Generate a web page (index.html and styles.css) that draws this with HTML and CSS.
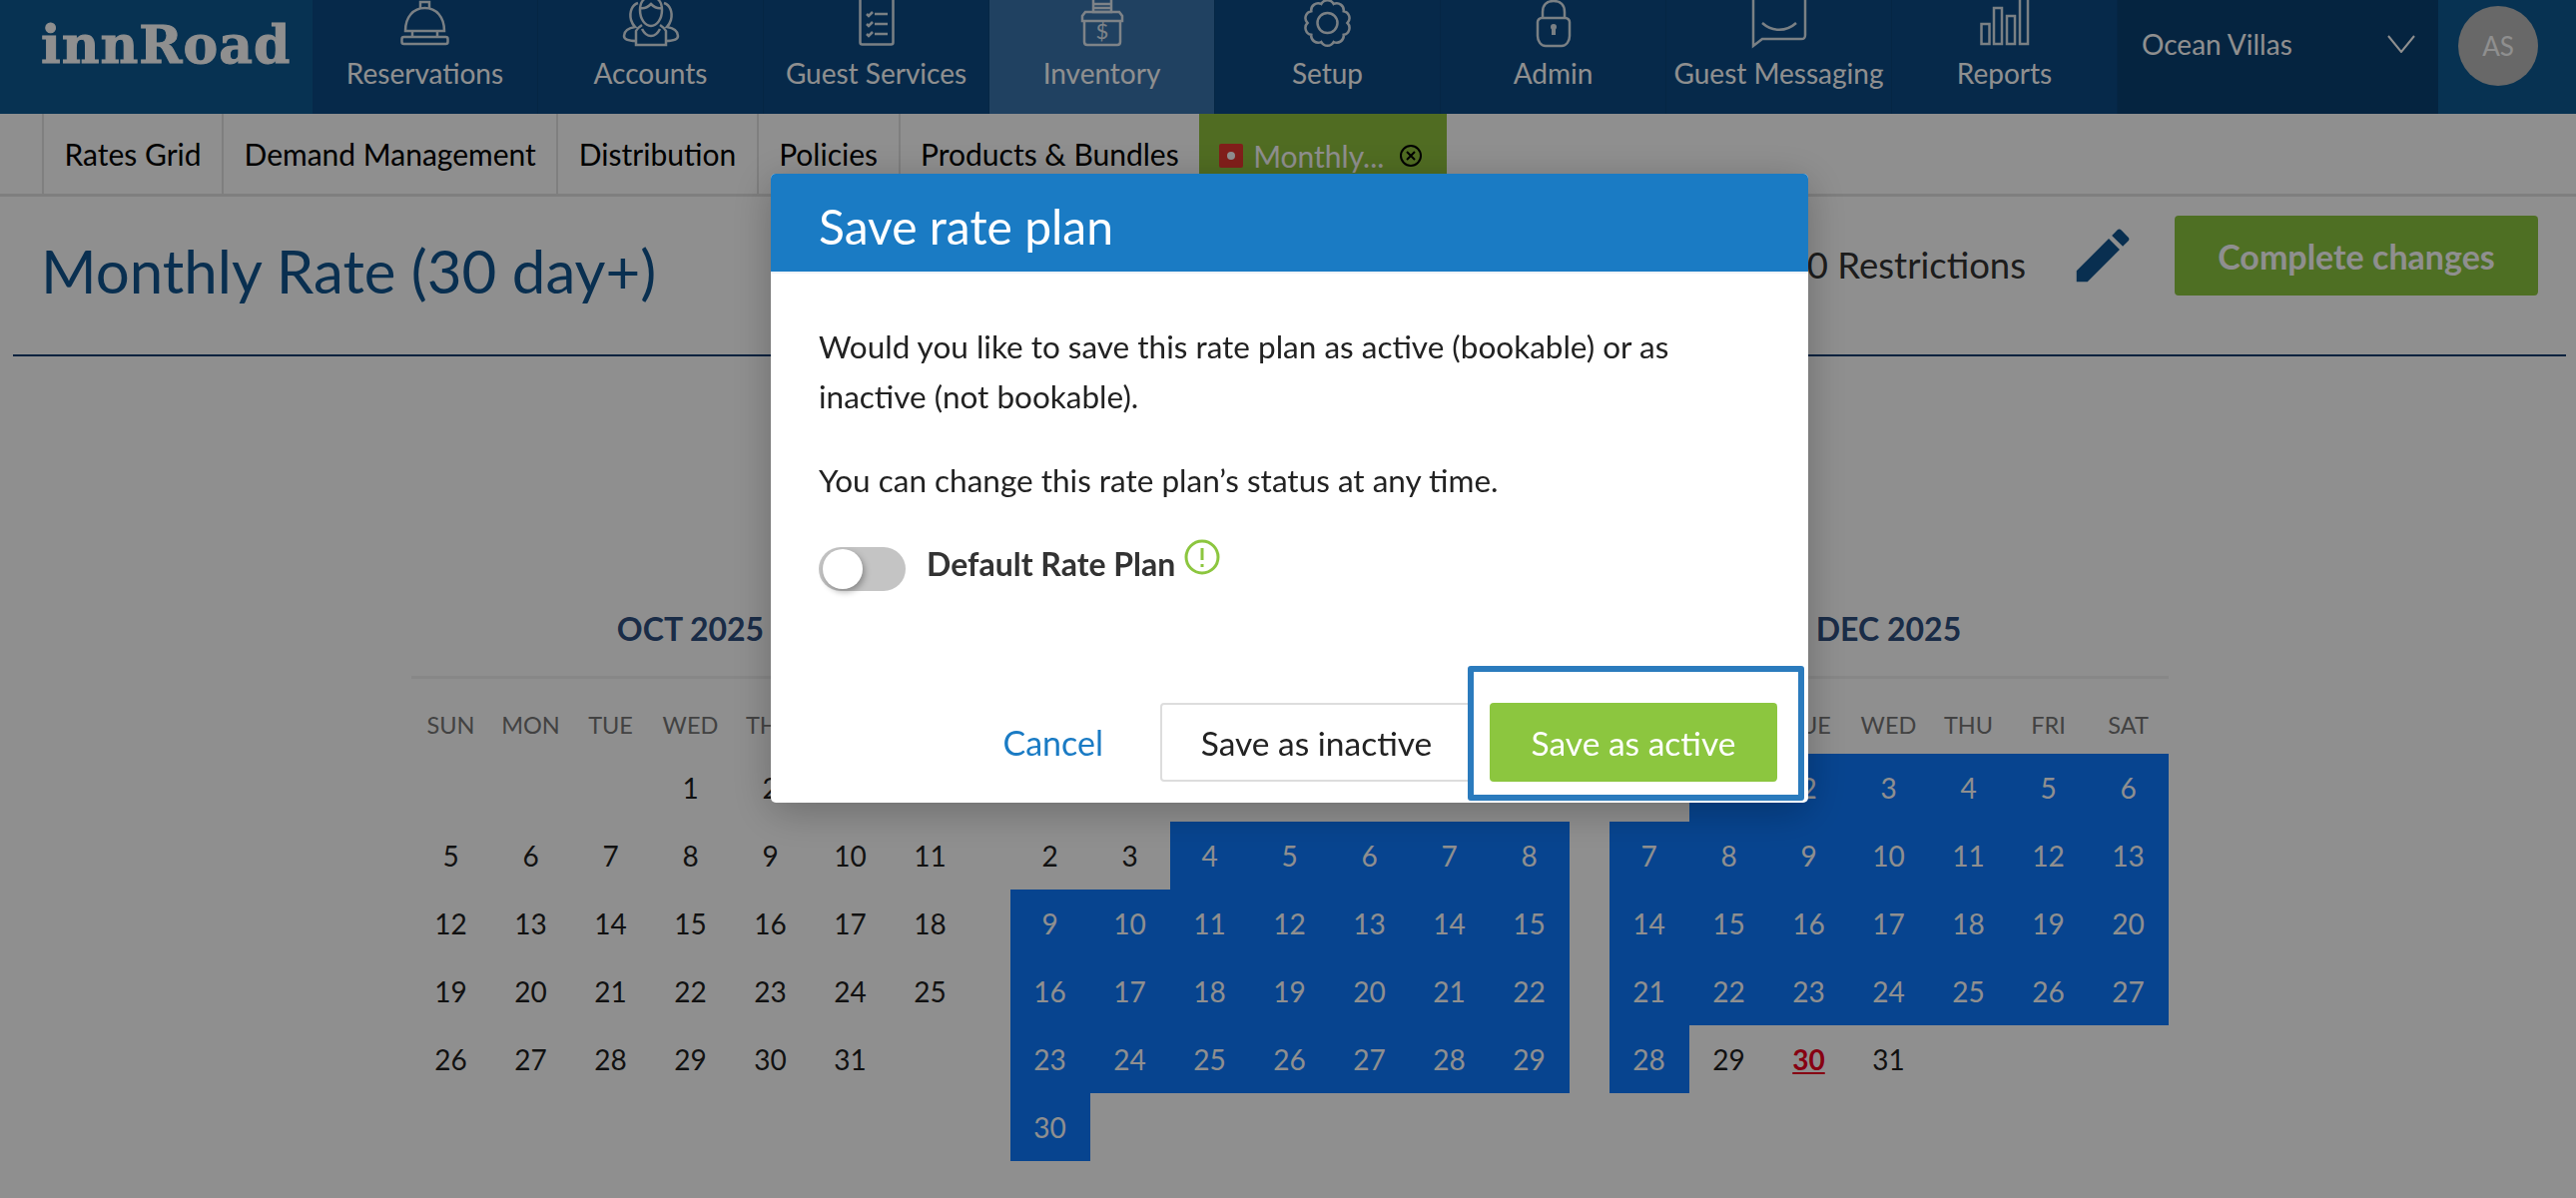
FILE: index.html
```html
<!DOCTYPE html>
<html lang="en">
<head>
    <meta charset="UTF-8">
    <title>Monthly Rate</title>
    <link rel="stylesheet" href="styles.css">
</head>
<body>
    <!-- Top Bar -->
    <header class="top-bar">
        <div class="logo">innRoad</div>
        <nav class="main-nav">
            <a class="nav-item">
                <span class="nav-icon">
                    <svg width="49" height="46" viewBox="0 0 49 46"><path d="M5 31C5 17 13 8 24.500 8S44 17 44 31Z"/><path d="M20 8V2h9v6"/><path d="M12 31v6M37 31v6"/><rect x="1.500" y="37" width="46" height="7" rx="2"/></svg>
                </span>
                Reservations
            </a>
            <a class="nav-item">
                <span class="nav-icon">
                    <svg width="60" height="46" viewBox="0 0 60 46"><path d="M30 -3c-7 0-11 5-11 13 0 9 5 16 11 16s11-7 11-16c0-8-4-13-11-13Z"/><path d="M19 8c4 1 8-1 11-4 3 3 7 5 11 4"/><path d="M21 25c-3 2-5 4-6 6v14h30V31c-1-2-3-4-6-6"/><path d="M30 36c-4 0-7-3-9-7M30 36c4 0 7-3 9-7"/><path d="M17 3c-6 2-9 9-7 17 1 3 2 5 4 7-6 1-11 4-11 9 0 3 4 5 12 5"/><path d="M43 3c6 2 9 9 7 17-1 3-2 5-4 7 6 1 11 4 11 9 0 3-4 5-12 5"/></svg>
                </span>
                Accounts
            </a>
            <a class="nav-item">
                <span class="nav-icon">
                    <svg width="36" height="46" viewBox="0 0 36 46"><rect x="1.500" y="-6" width="33" height="50.500" rx="2"/><path d="M8 14l2 2 4-4M8 24l2 2 4-4M8 34l2 2 4-4"/><path d="M16 14h13M16 24h13M16 34h13"/></svg>
                </span>
                Guest Services
            </a>
            <a class="nav-item is-active">
                <span class="nav-icon">
                    <svg width="44" height="46" viewBox="0 0 44 46"><path d="M13 -2h18v14H13Z"/><path d="M13 4h18M13 8h18"/><path d="M5 12h34l3 4v5H2v-5Z"/><path d="M4 21v21c0 2 1 3 3 3h30c2 0 3-1 3-3V21"/><text class="icon-text" x="22" y="39" text-anchor="middle">$</text></svg>
                </span>
                Inventory
            </a>
            <a class="nav-item">
                <span class="nav-icon">
                    <svg width="49" height="46" viewBox="0 0 49 46"><path d="M44.500 23A7 7 0 0 1 40.700 34.800A7 7 0 0 1 30.700 42A7 7 0 0 1 18.300 42A7 7 0 0 1 8.300 34.800A7 7 0 0 1 4.500 23A7 7 0 0 1 8.300 11.200A7 7 0 0 1 18.300 4A7 7 0 0 1 30.700 4A7 7 0 0 1 40.700 11.200A7 7 0 0 1 44.500 23Z"/><circle cx="24.500" cy="23" r="10"/></svg>
                </span>
                Setup
            </a>
            <a class="nav-item">
                <span class="nav-icon">
                    <svg width="36" height="46" viewBox="0 0 36 46"><path d="M7 18V12C7 5 11 1 18 1s11 4 11 11v6"/><path d="M6 18h24c2 0 4 2 4 4v14c0 5-3 10-8 10H10c-5 0-8-5-8-10V22c0-2 2-4 4-4Z"/><path class="filled" d="M15 27a3 3 0 1 1 6 0c0 1-.5 2-1 2.500V35h-4v-5.500c-.5-.5-1-1.500-1-2.500Z"/></svg>
                </span>
                Admin
            </a>
            <a class="nav-item">
                <span class="nav-icon">
                    <svg width="56" height="46" viewBox="0 0 56 46"><path d="M2 46V-4c0-2 1-3 3-3h46c2 0 3 1 3 3v39c0 3-1 4-4 4H11Z"/><path d="M11 23c10 9 24 9 34 0"/></svg>
                </span>
                Guest Messaging
            </a>
            <a class="nav-item">
                <span class="nav-icon">
                    <svg width="50" height="46" viewBox="0 0 50 46"><rect x="1.500" y="24" width="8" height="20"/><rect x="14" y="8" width="8" height="36"/><rect x="27" y="16" width="8" height="28"/><rect x="40" y="-2" width="8" height="46"/></svg>
                </span>
                Reports
            </a>
        </nav>
        <div class="property-select">
            <span>Ocean Villas</span>
            <svg class="caret" width="28" height="18" viewBox="0 0 28 18"><path d="M1 1l13 16L27 1"/></svg>
        </div>
        <div class="user-box">
            <div class="avatar">AS</div>
        </div>
    </header>

    <!-- Sub Tabs -->
    <div class="sub-tabs">
        <a class="sub-tab">Rates Grid</a>
        <a class="sub-tab">Demand Management</a>
        <a class="sub-tab">Distribution</a>
        <a class="sub-tab">Policies</a>
        <a class="sub-tab">Products &amp; Bundles</a>
        <a class="sub-tab is-open">
            <span class="tab-flag"><span class="tab-flag-dot"></span></span>
            <span>Monthly...</span>
            <svg class="tab-close" width="24" height="24" viewBox="0 0 24 24"><circle cx="12" cy="12" r="10"/><path d="M8 8l8 8M16 8l-8 8"/></svg>
        </a>
    </div>

    <!-- Title Row -->
    <div class="title-row">
        <h1>Monthly Rate (30 day+)</h1>
        <div class="title-actions">
            <span class="restrictions">0 Restrictions</span>
            <svg class="pencil" width="70" height="70" viewBox="0 0 24 24"><path d="M3 17.250V21h3.750L17.810 9.940l-3.750-3.750L3 17.250zM20.710 7.040a1 1 0 0 0 0-1.410l-2.340-2.340a1 1 0 0 0-1.410 0l-1.830 1.830 3.750 3.750 1.830-1.830z"/></svg>
            <button class="complete-btn">Complete changes</button>
        </div>
    </div>

    <!-- Calendars -->
    <div class="calendars">
        <section class="month">
            <h2>OCT 2025</h2>
            <div class="week-head"><span>SUN</span><span>MON</span><span>TUE</span><span>WED</span><span>THU</span><span>FRI</span><span>SAT</span></div>
            <div class="days">
                <span></span><span></span><span></span><span>1</span><span>2</span><span>3</span><span>4</span>
                <span>5</span><span>6</span><span>7</span><span>8</span><span>9</span><span>10</span><span>11</span>
                <span>12</span><span>13</span><span>14</span><span>15</span><span>16</span><span>17</span><span>18</span>
                <span>19</span><span>20</span><span>21</span><span>22</span><span>23</span><span>24</span><span>25</span>
                <span>26</span><span>27</span><span>28</span><span>29</span><span>30</span><span>31</span><span></span>
            </div>
        </section>
        <section class="month">
            <h2>NOV 2025</h2>
            <div class="week-head"><span>SUN</span><span>MON</span><span>TUE</span><span>WED</span><span>THU</span><span>FRI</span><span>SAT</span></div>
            <div class="days">
                <span></span><span></span><span></span><span></span><span></span><span></span><span>1</span>
                <span>2</span><span>3</span><span class="sel">4</span><span class="sel">5</span><span class="sel">6</span><span class="sel">7</span><span class="sel">8</span>
                <span class="sel">9</span><span class="sel">10</span><span class="sel">11</span><span class="sel">12</span><span class="sel">13</span><span class="sel">14</span><span class="sel">15</span>
                <span class="sel">16</span><span class="sel">17</span><span class="sel">18</span><span class="sel">19</span><span class="sel">20</span><span class="sel">21</span><span class="sel">22</span>
                <span class="sel">23</span><span class="sel">24</span><span class="sel">25</span><span class="sel">26</span><span class="sel">27</span><span class="sel">28</span><span class="sel">29</span>
                <span class="sel">30</span>
            </div>
        </section>
        <section class="month">
            <h2>DEC 2025</h2>
            <div class="week-head"><span>SUN</span><span>MON</span><span>TUE</span><span>WED</span><span>THU</span><span>FRI</span><span>SAT</span></div>
            <div class="days">
                <span></span><span class="sel">1</span><span class="sel">2</span><span class="sel">3</span><span class="sel">4</span><span class="sel">5</span><span class="sel">6</span>
                <span class="sel">7</span><span class="sel">8</span><span class="sel">9</span><span class="sel">10</span><span class="sel">11</span><span class="sel">12</span><span class="sel">13</span>
                <span class="sel">14</span><span class="sel">15</span><span class="sel">16</span><span class="sel">17</span><span class="sel">18</span><span class="sel">19</span><span class="sel">20</span>
                <span class="sel">21</span><span class="sel">22</span><span class="sel">23</span><span class="sel">24</span><span class="sel">25</span><span class="sel">26</span><span class="sel">27</span>
                <span class="sel">28</span><span>29</span><span class="today">30</span><span>31</span>
            </div>
        </section>
    </div>

    <!-- Modal -->
    <div class="overlay">
        <div class="modal">
            <div class="modal-head">Save rate plan</div>
            <div class="modal-body">
                <p>Would you like to save this rate plan as active (bookable) or as inactive (not bookable).</p>
                <p>You can change this rate plan’s status at any time.</p>
                <div class="default-row">
                    <span class="toggle"><span class="toggle-knob"></span></span>
                    <strong>Default Rate Plan</strong>
                    <svg class="info-icon" width="36" height="36" viewBox="0 0 36 36"><circle cx="18" cy="18" r="16"/><path d="M18 9v12M18 25v3"/></svg>
                </div>
            </div>
            <div class="modal-foot">
                <a class="cancel-link">Cancel</a>
                <button class="btn-inactive">Save as inactive</button>
                <button class="btn-active">Save as active</button>
                <div class="callout"></div>
            </div>
        </div>
    </div>
</body>
</html>
```

FILE: styles.css
```css
/* Basic Reset */
* {
    box-sizing: border-box;
    margin: 0;
    padding: 0;
}

body {
    font-family: Lato, "Open Sans", sans-serif;
    background: #fff;
    color: #1f1f1f;
    height: 1200px;
    overflow: hidden;
}

/* Top Bar */
.top-bar {
    display: flex;
    height: 114px;
    overflow: hidden;
    background-color: #0d5a92;
    color: #fff;
}

.logo {
    width: 313px;
    padding: 13px 0 0 41px;
    font-family: "DejaVu Serif", serif;
    font-weight: bold;
    font-size: 52px;
    line-height: 64px;
    letter-spacing: 1px;
    -webkit-text-stroke: 1px #fff;
}

.main-nav {
    display: flex;
}

.nav-item {
    width: 226px;
    display: flex;
    flex-direction: column;
    align-items: center;
    font-size: 28px;
    line-height: 32px;
    background-color: #0b4a85;
    border-right: 1px solid #0a4479;
}

.nav-item.is-active {
    background-color: #3a74ad;
}

.nav-icon {
    height: 46px;
    margin-bottom: 11px;
    display: flex;
    align-items: flex-end;
}

.nav-icon svg {
    display: block;
    overflow: visible;
    fill: none;
    stroke: #fff;
    stroke-width: 2.500;
    opacity: 0.85;
}

.nav-icon .filled {
    fill: #fff;
    stroke: none;
}

.icon-text {
    font-size: 22px;
    fill: #fff;
    stroke: none;
}

.property-select {
    width: 321px;
    padding: 26px 23px 0 24px;
    display: flex;
    justify-content: space-between;
    align-items: flex-start;
    font-size: 28px;
    line-height: 36px;
    background-color: #0a4073;
}

.caret {
    margin-top: 9px;
    fill: none;
    stroke: #fff;
    stroke-width: 2;
}

.user-box {
    flex: 1;
    padding: 6px 0 0 20px;
}

.avatar {
    width: 80px;
    height: 80px;
    border-radius: 50%;
    background-color: #b9b9b9;
    font-size: 26px;
    line-height: 80px;
    text-align: center;
}

/* Sub Tabs */
.sub-tabs {
    display: flex;
    height: 83px;
    padding-left: 42px;
    border-bottom: 3px solid #e2e2e2;
}

.sub-tab {
    display: flex;
    align-items: center;
    padding: 0 20.500px;
    font-size: 30px;
    color: #000;
    border-left: 2px solid #e2e2e2;
}

.sub-tab.is-open {
    width: 248px;
    margin-bottom: -3px;
    padding: 0 0 0 20px;
    border-left: 0;
    background-color: #8fc13d;
    color: #fff;
}

.tab-flag {
    width: 24px;
    height: 24px;
    margin-right: 10px;
    border-radius: 2px;
    background-color: #e8372f;
    display: flex;
    align-items: center;
    justify-content: center;
}

.tab-flag-dot {
    width: 8px;
    height: 8px;
    border-radius: 50%;
    background-color: #fff;
}

.tab-close {
    margin-left: 15px;
    fill: none;
    stroke: #000;
    stroke-width: 2;
}

/* Title Row */
.title-row {
    display: flex;
    justify-content: space-between;
    align-items: flex-start;
    height: 160px;
    margin: 0 10px 0 13px;
    padding: 0 28px 0 28px;
    border-bottom: 2px solid #0f3d70;
}

.title-row h1 {
    font-size: 60px;
    font-weight: 400;
    line-height: 70px;
    margin-top: 39px;
    color: #11558f;
}

.title-actions {
    display: flex;
    align-items: flex-start;
}

.restrictions {
    margin-top: 48px;
    font-size: 36.500px;
    line-height: 40px;
    color: #333;
}

.pencil {
    margin: 24px 0 0 42px;
    fill: #11558f;
}

.complete-btn {
    width: 364px;
    height: 80px;
    margin: 19px 0 0 37px;
    border: 0;
    border-radius: 4px;
    background-color: #8cc63f;
    color: #fff;
    font-family: inherit;
    font-size: 34px;
    font-weight: bold;
}

/* Calendars */
.calendars {
    display: flex;
    justify-content: center;
    gap: 40px;
    margin-top: 243px;
    padding-left: 3px;
}

.month {
    width: 560px;
}

.month h2 {
    height: 80px;
    padding-top: 10px;
    border-bottom: 3px solid #f0f0f0;
    font-size: 32px;
    line-height: 40px;
    text-align: center;
    color: #2f4f7f;
}

.week-head {
    display: grid;
    grid-template-columns: repeat(7, 80px);
    height: 75px;
    padding-top: 31px;
    font-size: 23.500px;
    line-height: 30px;
    text-align: center;
    color: #777;
}

.days {
    display: grid;
    grid-template-columns: repeat(7, 80px);
    grid-auto-rows: 68px;
    font-size: 28px;
    line-height: 68px;
    text-align: center;
}

.days .sel {
    background-color: #0d7aff;
    color: #fff;
}

.days .today {
    color: #f00020;
    font-weight: bold;
    text-decoration: underline;
}

/* Modal */
.overlay {
    position: fixed;
    top: 0;
    left: 0;
    width: 100%;
    height: 100%;
    display: flex;
    justify-content: center;
    align-items: flex-start;
    padding: 174px 0 0 3px;
    background: rgba(0, 0, 0, 0.44);
}

.modal {
    width: 1039px;
    height: 630px;
    display: flex;
    flex-direction: column;
    border-radius: 5px;
    background: #fff;
    box-shadow: 0 8px 40px rgba(0, 0, 0, 0.25);
}

.modal-head {
    height: 100px;
    padding: 6px 0 0 48px;
    border-bottom: 2px solid #eef3f7;
    border-radius: 5px 5px 0 0;
    background-color: #1a7bc4;
    color: #fff;
    font-size: 48px;
    line-height: 93px;
}

.modal-body {
    flex: 1;
    padding: 48px 48px 0;
    font-size: 31.500px;
    line-height: 50px;
    color: #222;
}

.modal-body p {
    margin-bottom: 34px;
}

.default-row {
    display: flex;
    align-items: flex-start;
}

.default-row strong {
    margin: 0 9px 0 21px;
    font-size: 32px;
    color: #333;
}

.toggle {
    width: 87px;
    height: 44px;
    margin-top: 8px;
    border-radius: 22px;
    background-color: #c4c4c4;
    padding: 2px 0 0 4px;
}

.toggle-knob {
    display: block;
    width: 40px;
    height: 40px;
    border-radius: 50%;
    background: #fff;
    box-shadow: 2px 3px 6px rgba(0, 0, 0, 0.3);
}

.info-icon {
    fill: none;
    stroke: #8cc63f;
    stroke-width: 3;
}

.modal-foot {
    position: relative;
    display: flex;
    justify-content: flex-end;
    align-items: center;
    height: 79px;
    margin-bottom: 21px;
    padding-right: 31px;
    font-size: 34px;
}

.cancel-link {
    margin-right: 57px;
    color: #1a7bc4;
}

.modal-foot button {
    height: 79px;
    border-radius: 4px;
    font-family: inherit;
    font-size: 33.500px;
}

.btn-inactive {
    width: 313px;
    margin-right: 17px;
    background: #fff;
    color: #222;
    border: 2px solid #ddd;
}

.btn-active {
    width: 288px;
    border: 0;
    background-color: #8cc63f;
    color: #fff;
}

/* highlight box drawn over the buttons */
.callout {
    position: absolute;
    top: -37px;
    right: 4px;
    width: 337px;
    height: 135px;
    border: 6px solid #2b7bbd;
    border-radius: 3px;
}
```
